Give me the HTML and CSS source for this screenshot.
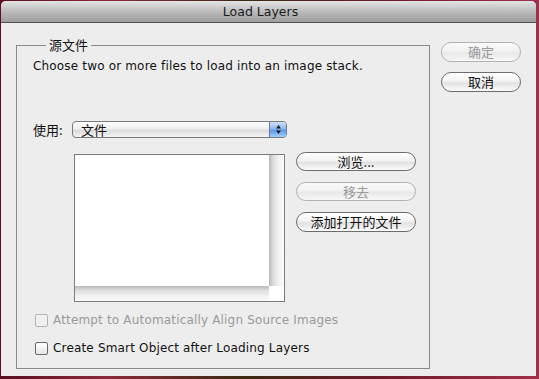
FILE: index.html
```html
<!DOCTYPE html>
<html>
<head>
    <title>Load Layers</title>
    <link rel="stylesheet" href="styles.css">
</head>
<body>
    <div class="window">
        <div class="titlebar">Load Layers</div>
        <div class="content">
            <fieldset class="group">
                <legend>源文件</legend>
                <p class="hint">Choose two or more files to load into an image stack.</p>

                <div class="use-row">
                    <span class="label">使用:</span>
                    <div class="popup">
                        <span class="popup-text">文件</span>
                        <span class="popup-arrows">
                            <svg width="7" height="11" viewBox="0 0 7 11">
                                <path d="M3.5 1 L6 4.5 L1 4.5 Z" fill="#1a1a1a"/>
                                <path d="M3.5 10 L6 6.5 L1 6.5 Z" fill="#1a1a1a"/>
                            </svg>
                        </span>
                    </div>
                </div>

                <div class="files">
                    <div class="listbox">
                        <div class="list-area"></div>
                        <div class="vscroll"></div>
                        <div class="hscroll"></div>
                        <div class="corner"></div>
                    </div>
                    <div class="list-buttons">
                        <button class="pill">浏览...</button>
                        <button class="pill" disabled>移去</button>
                        <button class="pill">添加打开的文件</button>
                    </div>
                </div>

                <label class="check disabled"><span class="box"></span>Attempt to Automatically Align Source Images</label>
                <label class="check"><span class="box"></span>Create Smart Object after Loading Layers</label>
            </fieldset>

            <div class="side">
                <button class="pill" disabled>确定</button>
                <button class="pill">取消</button>
            </div>
        </div>
    </div>
</body>
</html>
```

FILE: styles.css
```css
html, body {
    margin: 0;
    height: 100%;
}
body {
    background: linear-gradient(90deg, #5a1020 0%, #8a2a3a 20%, #3a2a10 45%, #6a1a2a 70%, #a0304a 100%);
    font-family: "DejaVu Sans", "Noto Sans CJK SC", sans-serif;
    font-size: 12px;
    color: #111;
    overflow: hidden;
}
.window {
    margin: 1px 0 0 1px;
    width: 535px;
    height: 375px;
    background: #ededed;
    border-radius: 5px 5px 0 0;
    display: flex;
    flex-direction: column;
    overflow: hidden;
}
.titlebar {
    height: 21px;
    line-height: 21px;
    border-bottom: 1px solid #505050;
    background: linear-gradient(#e4e4e4, #b4b4b4 60%, #9e9e9e);
    text-align: center;
    font-size: 12.5px;
    color: #1a1a1a;
    padding-right: 16px;
}
.content {
    display: flex;
    align-items: flex-start;
    padding: 15px 0 0 15px;
}
.group {
    margin: 0;
    width: 414px;
    height: 331px;
    padding: 0 0 0 16px;
    border: 1px solid #8a8a8a;
    box-sizing: border-box;
}
.group legend {
    margin-left: 13px;
    padding: 0 3px;
    font-family: "Noto Sans CJK SC", sans-serif;
    font-size: 13px;
    line-height: 14px;
}
.hint {
    margin: 6px 0 0 0;
    line-height: 16px;
    letter-spacing: 0.17px;
}
.use-row {
    display: flex;
    align-items: center;
    margin-top: 46px;
}
.label {
    font-family: "Noto Sans CJK SC", sans-serif;
    font-size: 13px;
    width: 39px;
}
.popup {
    display: flex;
    width: 215px;
    height: 17px;
    box-sizing: border-box;
    border: 1px solid #7a7a7a;
    border-radius: 4px;
    background: linear-gradient(#fdfdfd, #f0f0f0 45%, #dcdcdc 55%, #f4f4f4);
    overflow: hidden;
}
.popup-text {
    flex: 1;
    padding-left: 8px;
    font-family: "Noto Sans CJK SC", sans-serif;
    font-size: 13px;
    line-height: 15px;
}
.popup-arrows {
    width: 16px;
    display: flex;
    align-items: center;
    justify-content: center;
    border-left: 1px solid #5a7ab0;
    background: linear-gradient(#cfe2fb, #8fb8ee 45%, #5c97e4 55%, #a4d0fa);
}
.files {
    display: flex;
    align-items: flex-start;
    margin-top: 15px;
    padding-left: 41px;
}
.listbox {
    width: 211px;
    height: 148px;
    box-sizing: border-box;
    border: 1px solid #7c7c7c;
    background: #fff;
    display: grid;
    grid-template-columns: 1fr 15px;
    grid-template-rows: 1fr 15px;
}
.vscroll {
    background: linear-gradient(90deg, #b9b9b9, #dedede 30%, #f4f4f4 70%, #fafafa);
}
.hscroll {
    background: linear-gradient(#b9b9b9, #dedede 30%, #f4f4f4 70%, #fafafa);
}
.corner {
    background: #fff;
}
.list-buttons {
    display: flex;
    flex-direction: column;
    gap: 11px;
    margin-left: 11px;
    margin-top: -2px;
}
.pill {
    width: 120px;
    height: 19px;
    padding: 0;
    border: 1px solid #6c6c6c;
    border-radius: 10px;
    background: linear-gradient(#ffffff, #f3f3f3 45%, #e2e2e2 55%, #fbfbfb);
    font-family: "Noto Sans CJK SC", sans-serif;
    font-size: 13px;
    line-height: 16px;
    color: #111;
}
.pill:disabled {
    border-color: #b2b2b2;
    color: #9a9a9a;
    background: linear-gradient(#fafafa, #f2f2f2 45%, #e8e8e8 55%, #f8f8f8);
}
.list-buttons .pill:last-child {
    height: 20px;
}
.check {
    display: flex;
    align-items: center;
    height: 16px;
    margin-top: 10px;
    padding-left: 2px;
    font-size: 12px;
    letter-spacing: 0.17px;
}
.check + .check {
    margin-top: 12px;
}
.check .box {
    width: 11px;
    height: 11px;
    border: 1px solid #6a6a6a;
    border-radius: 2px;
    background: linear-gradient(#ffffff, #e6e6e6);
    margin-right: 5px;
}
.check.disabled {
    color: #9a9a9a;
}
.check.disabled .box {
    border-color: #b4b4b4;
    background: #f0f0f0;
}
.side {
    display: flex;
    flex-direction: column;
    gap: 10px;
    margin-left: 11px;
    margin-top: 4px;
}
.side .pill {
    width: 80px;
    height: 20px;
}
```
